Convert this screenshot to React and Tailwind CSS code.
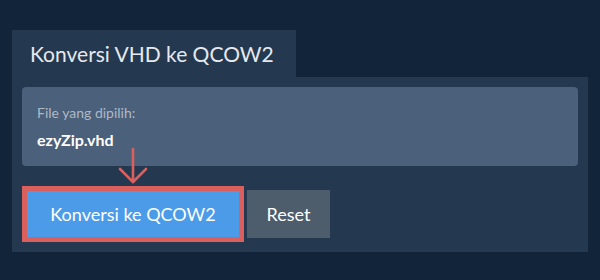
export default function App() {
  return (
    <div
      className="w-[600px] h-[280px] bg-[#11243a] pt-[30px] px-[12px]"
      style={{ fontFamily: "Lato, 'Noto Sans', sans-serif" }}
    >
      <div className="flex">
        <div className="h-[47px] w-[284px] bg-[#243850] pl-[18px] flex items-center text-[21px] text-[#e6e9ee]">
          Konversi VHD ke QCOW2
        </div>
      </div>
      <div className="bg-[#243850] p-[10px]">
        <div className="relative h-[79px] rounded-[4px] bg-[#4b607a] px-[15px] pt-[16px]">
          <div className="text-[14px] leading-[20px] text-[#aeb9c6]">File yang dipilih:</div>
          <div className="mt-[6px] text-[16px] leading-[22px] font-bold text-white">ezyZip.vhd</div>
          <svg
            className="absolute left-[95px] top-[60px]"
            width="32"
            height="38"
            viewBox="0 0 32 38"
            fill="none"
            stroke="#d9605c"
            strokeWidth="2.6"
            strokeLinecap="round"
            strokeLinejoin="round"
          >
            <path d="M16 2 V35" />
            <path d="M3 22 L16 35 L29 22" />
          </svg>
        </div>
        <div className="mt-[20px] flex items-center">
          <div className="border-[5px] border-[#d9605c]">
            <button className="h-[46px] w-[212px] bg-[#4c9be8] text-[18px] text-white">
              Konversi ke QCOW2
            </button>
          </div>
          <button className="ml-[3px] h-[48px] w-[83px] bg-[#4e5d6c] text-[18px] text-white">
            Reset
          </button>
        </div>
      </div>
    </div>
  );
}
